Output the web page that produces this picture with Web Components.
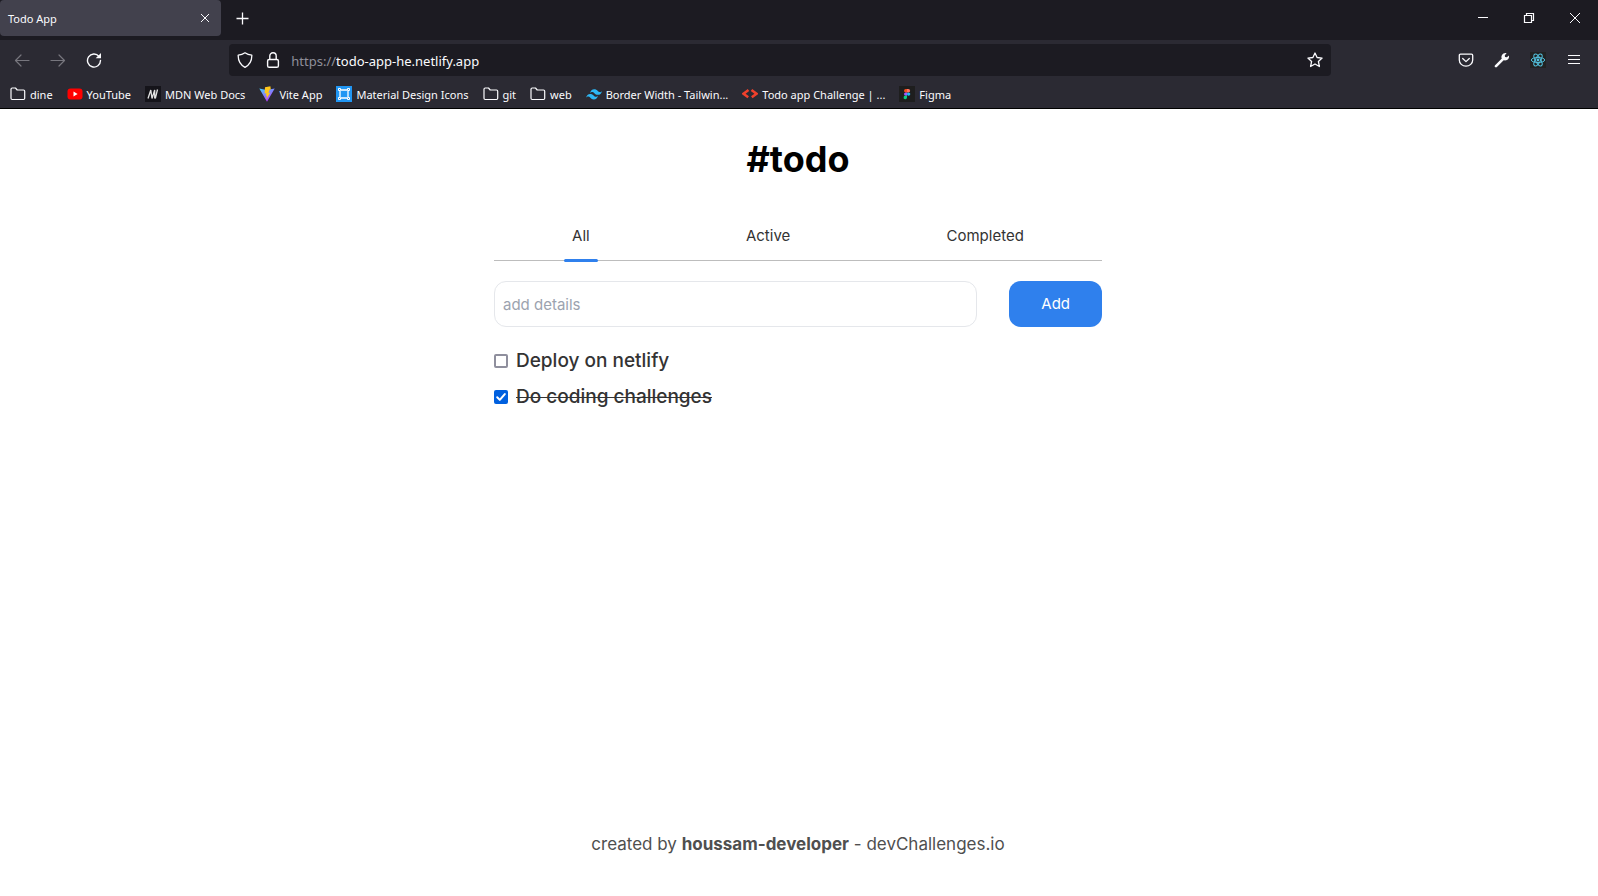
<!DOCTYPE html>
<html lang="en">
<head>
<meta charset="utf-8">
<title>Todo App</title>
<style>
  body { margin: 0; background: #fff; font-family: "Noto Sans", sans-serif; }
</style>
</head>
<body>
<browser-window>
  <browser-tabs slot="tabs"></browser-tabs>
  <nav-toolbar slot="toolbar"></nav-toolbar>
  <bookmarks-bar slot="bookmarks">
    <bookmark-item icon="folder">dine</bookmark-item>
    <bookmark-item icon="youtube">YouTube</bookmark-item>
    <bookmark-item icon="mdn">MDN Web Docs</bookmark-item>
    <bookmark-item icon="vite">Vite App</bookmark-item>
    <bookmark-item icon="mdi">Material Design Icons</bookmark-item>
    <bookmark-item icon="folder">git</bookmark-item>
    <bookmark-item icon="folder">web</bookmark-item>
    <bookmark-item icon="tailwind">Border Width - Tailwin...</bookmark-item>
    <bookmark-item icon="dev">Todo app Challenge | ...</bookmark-item>
    <bookmark-item icon="figma">Figma</bookmark-item>
  </bookmarks-bar>
  <todo-app>
    <todo-item>Deploy on netlify</todo-item>
    <todo-item done>Do coding challenges</todo-item>
  </todo-app>
</browser-window>

<script>
const ICONS = {
  close: '<path d="M4 4l8 8M12 4l-8 8" fill="none" stroke="currentColor" stroke-width="1"/>',
  plus: '<path d="M8.500 2.500v12M2.500 8.500h12" fill="none" stroke="currentColor" stroke-width="1.3"/>',
  minimize: '<path d="M3 7.5h10" stroke="currentColor"/>',
  restore: '<path d="M3.500 5.500h7v7h-7zM5.500 5.500v-2h7v7h-2" fill="none" stroke="currentColor" stroke-width="1.2"/>',
  winclose: '<path d="M3 3l10 10M13 3L3 13" fill="none" stroke="currentColor"/>',
  back: '<path d="M15 8.500H1.500M7 3L1.500 8.500 7 14" fill="none" stroke="currentColor" stroke-width="1.2" stroke-linecap="round" stroke-linejoin="round"/>',
  forward: '<path d="M1 8.500h13.500M9 3l5.500 5.500L9 14" fill="none" stroke="currentColor" stroke-width="1.200" stroke-linecap="round" stroke-linejoin="round"/>',
  reload: '<path d="M13 4.400A6.500 6.500 0 1 0 14.500 8.500" fill="none" stroke="currentColor" stroke-width="1.4" stroke-linecap="round"/><path d="M15 1v5.300H9.700z" fill="currentColor"/>',
  shield: '<path d="M8 .8c2 1.500 4.300 2.200 6.800 2.300.2 5.500-1.700 9.500-6.800 12.300C2.900 12.600 1 8.600 1.200 3.100 3.700 3 6 2.300 8 .8z" fill="none" stroke="currentColor" stroke-width="1.300" stroke-linejoin="round"/>',
  lock: '<rect x="2.600" y="7.500" width="10.800" height="7.800" rx="1.600" fill="none" stroke="currentColor" stroke-width="1.400"/><path d="M4.800 7.500V4a3.200 3.200 0 0 1 6.400 0v3.500" fill="none" stroke="currentColor" stroke-width="1.400"/>',
  star: '<path d="M8 1l2.100 4.500 5 .6-3.700 3.400 1 5L8 12l-4.400 2.500 1-5L.9 6.100l5-.6z" fill="none" stroke="currentColor" stroke-width="1.300" stroke-linejoin="round"/>',
  pocket: '<path d="M2.500 2.200h11c.7 0 1.200.5 1.200 1.200V8a6.700 6.200 0 0 1-13.400 0V3.400c0-.7.5-1.200 1.200-1.200z" fill="none" stroke="currentColor" stroke-width="1.300"/><path d="M4.700 6.500L8 9.600l3.300-3.100" fill="none" stroke="currentColor" stroke-width="1.300" stroke-linecap="round" stroke-linejoin="round"/>',
  wrench: '<path d="M2 14.200L8.500 7.700" stroke="currentColor" stroke-width="2.600" stroke-linecap="round"/><path d="M12.600 1.200L10.800 3.200l.2 1.900 1.900.2 2-1.900c.5 2-.3 3.800-1.900 4.700-1.400.7-2.700.6-3.800 0L7.900 6.800C7.300 5.700 7.200 4.400 8 3c.9-1.500 2.700-2.300 4.600-1.800z" fill="currentColor"/>',
  react: '<path d="M0 0h16v16H0z" fill="#222"/><g fill="none" stroke="#53c1de" stroke-width="1"><ellipse cx="8" cy="8" rx="6.700" ry="2.600"/><ellipse cx="8" cy="8" rx="6.700" ry="2.600" transform="rotate(60 8 8)"/><ellipse cx="8" cy="8" rx="6.700" ry="2.600" transform="rotate(120 8 8)"/></g><circle cx="8" cy="8" r="1.400" fill="#53c1de"/>',
  menu: '<path d="M2 3.500h12M2 7.500h12M2 11.500h12" stroke="currentColor" stroke-width="1.200"/>',
  folder: '<path d="M1 3.200c0-.8.5-1.200 1.200-1.200h3.300l1.700 2h6.300c.7 0 1.200.5 1.200 1.200v7.100c0 .7-.5 1.200-1.200 1.200H2.200c-.7 0-1.200-.5-1.200-1.200z" fill="none" stroke="currentColor" stroke-width="1.200" stroke-linejoin="round"/>',
  youtube: '<rect x=".5" y="2.500" width="15" height="11" rx="3" fill="#f00"/><path d="M6.500 5.600v4.800L10.600 8z" fill="#fff"/>',
  mdn: '<path d="M0 0h16v16H0z" fill="#15141a"/><path d="M3 12.500L5.800 4l1.200 8.500L9.700 4v8.500M12.500 3.500L10.300 12.500" fill="none" stroke="#e0e0e0" stroke-width="1.300" stroke-linejoin="bevel"/>',
  vite: '<defs><linearGradient id="v" x2=".6" y2="1"><stop stop-color="#41d1ff"/><stop offset="1" stop-color="#bd34fe"/></linearGradient></defs><path d="M.3 2.600l7.200 1.300 8.200-1.300L8 15.800z" fill="url(#v)"/><path d="M11.400.2L6 1.300 5.600 7.600l1.800-.4-.6 2.700 1.200-.3-.7 3.700 4-6.700-1.900.3 1.200-3.100 1.200-.2z" fill="#ffc61c"/>',
  mdi: '<path d="M0 0h16v16H0z" fill="#2196f3"/><g fill="none" stroke="#fff"><path d="M4 5v6M12 5v6M5 4h6M5 12h6" stroke-width="1.300"/><path d="M2.500 2.500h2v2h-2zM11.500 2.500h2v2h-2zM2.500 11.500h2v2h-2zM11.500 11.500h2v2h-2z"/></g>',
  tailwind: '<path d="M4 7.200C4.600 4.600 6 3.300 8.200 3.300c3.200 0 3.500 2.400 5.200 2.800 1.100.3 1.800-.1 2.600-1.200-.6 2.600-2 3.900-4.200 3.900C8.600 8.800 8.300 6.400 6.600 6 5.500 5.700 4.800 6.100 4 7.200zM0 11.800c.6-2.600 2-3.900 4.200-3.900 3.200 0 3.500 2.400 5.200 2.800 1.100.3 1.800-.1 2.600-1.200-.6 2.600-2 3.900-4.200 3.900-3.200 0-3.500-2.400-5.200-2.800-1.100-.3-1.800.1-2.600 1.200z" fill="#2db7f5"/>',
  dev: '<path d="M6.500 4L1.500 7.700l4.700 3.600" fill="none" stroke="#f0402c" stroke-width="2.500"/><path d="M9.500 4l5 3.700-4.700 3.600" fill="none" stroke="#f0402c" stroke-width="2.500"/>',
  figma: '<path d="M0 0h16v16H0z" fill="#1e1e1e"/><path d="M8 3H6.700a1.700 1.700 0 0 0 0 3.400H8z" fill="#f24e1e"/><path d="M8 3h1.400a1.700 1.700 0 0 1 0 3.400H8z" fill="#ff7262"/><path d="M8 6.400H6.700a1.700 1.700 0 0 0 0 3.400H8z" fill="#a259ff"/><circle cx="9.600" cy="8.100" r="1.700" fill="#1abcfe"/><path d="M8 9.800H6.700A1.700 1.700 0 1 0 8 11.500z" fill="#0acf83"/>'
};

/* Base class: opens a shadow root and fills it with styles and markup. */
class Base extends HTMLElement {
  constructor() {
    super();
    const t = document.createElement('template');
    t.innerHTML = '<style>*{box-sizing:border-box}</style>' + this.view();
    this.attachShadow({ mode: 'open' }).append(t.content.cloneNode(true));
  }
}

customElements.define('ui-icon', class extends HTMLElement {
  constructor() { super(); this.attachShadow({ mode: 'open' }); }
  connectedCallback() {
    this.shadowRoot.innerHTML = `<style>
      :host { display: block; flex: none; width: 16px; height: 16px; }
      svg { display: block; width: 100%; height: 100%; }
    </style><svg viewBox="0 0 16 16" aria-hidden="true">${ICONS[this.getAttribute('name')] || ''}</svg>`;
  }
});

customElements.define('browser-window', class extends Base {
  view() { return `<style>
    :host { display: flex; flex-direction: column; min-height: 100vh; }
    header { background: #2b2a33; color: #fbfbfe; border-bottom: 1px solid #000; font-size: 11px; }
    main { flex: 1; display: flex; flex-direction: column; }
  </style>
  <header><slot name="tabs"></slot><slot name="toolbar"></slot><slot name="bookmarks"></slot></header>
  <main><slot></slot></main>`; }
});

customElements.define('browser-tabs', class extends Base {
  view() { return `<style>
    :host { display: flex; height: 40px; background: #1c1b22; }
    .tab { display: flex; align-items: center; justify-content: space-between; width: 221px; height: 36px; padding: 0 8px; background: #42414d; border-radius: 4px; }
    button { display: grid; place-items: center; padding: 0; border: 0; background: none; color: inherit; }
    .new { width: 42px; height: 36px; }
    .controls { display: flex; margin-left: auto; height: 36px; }
    .controls button { width: 46px; }
  </style>
  <div class="tab"><span>Todo App</span><button aria-label="Close tab"><ui-icon name="close"></ui-icon></button></div>
  <button class="new" aria-label="New tab"><ui-icon name="plus"></ui-icon></button>
  <div class="controls">
    <button aria-label="Minimize"><ui-icon name="minimize"></ui-icon></button>
    <button aria-label="Restore"><ui-icon name="restore"></ui-icon></button>
    <button aria-label="Close"><ui-icon name="winclose"></ui-icon></button>
  </div>`; }
});

customElements.define('nav-toolbar', class extends Base {
  view() { return `<style>
    :host { display: flex; align-items: center; height: 40px; padding: 0 6px 0 4px; }
    .group { display: flex; }
    button { display: grid; place-items: center; width: 36px; height: 32px; padding: 0; border: 0; background: none; color: inherit; }
    button:disabled { color: #77767e; }
    .spring { flex: 59 1 0; }
    .url { flex: 550 1 0; display: flex; align-items: center; height: 32px; padding-left: 8px; background: #1c1b22; border-radius: 4px; font-size: 13px; }
    .url ui-icon { margin-right: 12px; }
    .address { flex: 1; min-width: 0; display: flex; align-items: center; margin-left: -2px; padding-top: 1px; }
    label { color: #8f8f9a; }
    input { flex: 1; min-width: 0; padding: 0; border: 0; outline: 0; background: none; color: #fbfbfe; font: inherit; }
    .url button { width: 32px; }
    .url button ui-icon { margin: 0; }
  </style>
  <div class="group">
    <button disabled aria-label="Back"><ui-icon name="back"></ui-icon></button>
    <button disabled aria-label="Forward"><ui-icon name="forward"></ui-icon></button>
    <button aria-label="Reload"><ui-icon name="reload"></ui-icon></button>
  </div>
  <div class="spring"></div>
  <div class="url">
    <ui-icon name="shield"></ui-icon><ui-icon name="lock"></ui-icon>
    <div class="address"><label for="address">https://</label><input id="address" value="todo-app-he.netlify.app"></div>
    <button aria-label="Bookmark this page"><ui-icon name="star"></ui-icon></button>
  </div>
  <div class="spring"></div>
  <div class="group">
    <button aria-label="Save to Pocket"><ui-icon name="pocket"></ui-icon></button>
    <button aria-label="Developer tools"><ui-icon name="wrench"></ui-icon></button>
    <button aria-label="React Developer Tools"><ui-icon name="react"></ui-icon></button>
    <button aria-label="Menu"><ui-icon name="menu"></ui-icon></button>
  </div>`; }
});

customElements.define('bookmarks-bar', class extends Base {
  view() { return `<style>
    :host { display: flex; align-items: center; gap: 14px; height: 28px; padding: 0 10px; }
  </style><slot></slot>`; }
});

customElements.define('bookmark-item', class extends Base {
  view() { return `<style>
    :host { display: block; }
    a { display: flex; align-items: center; gap: 4px; color: inherit; text-decoration: none; white-space: nowrap; }
  </style><a href="#"><ui-icon></ui-icon><span><slot></slot></span></a>`; }
  connectedCallback() {
    const icon = this.shadowRoot.querySelector('ui-icon');
    icon.setAttribute('name', this.getAttribute('icon'));
    icon.connectedCallback();
  }
});

customElements.define('todo-app', class extends Base {
  view() { return `<style>
    :host { flex: 1; display: flex; flex-direction: column; align-items: center; padding: 30px 18px 40px 16px; font: 15px/20px Inter, sans-serif; color: #333; }
    section { width: 100%; max-width: 608px; }
    h1 { margin: 0 0 35px; font-size: 36px; line-height: 40px; font-weight: 700; text-align: center; color: #000; }
    nav { display: flex; justify-content: space-around; border-bottom: 1px solid #bdbdbd; }
    nav a { position: relative; padding: 12px 8px 14px; color: inherit; text-decoration: none; }
    nav a[aria-current]::after { content: ""; position: absolute; left: 0; right: 0; bottom: -2px; height: 3px; border-radius: 2px; background: #2f80ed; }
    form { display: flex; gap: 32px; margin: 20px 0 16px; }
    input { flex: 1; min-width: 0; height: 46px; padding: 0 8px; border: 1px solid #e5e7eb; border-radius: 12px; font: inherit; color: inherit; }
    input::placeholder { color: #9ca3af; }
    button { padding: 0 32px; border: 0; border-radius: 12px; background: #2f80ed; color: #fff; font: inherit; }
    footer { margin-top: auto; font-size: 17px; line-height: 24px; color: #4f4f4f; }
  </style>
  <section>
    <h1>#todo</h1>
    <nav><a href="#all" aria-current="page">All</a><a href="#active">Active</a><a href="#completed">Completed</a></nav>
    <form><input aria-label="Todo details" placeholder="add details"><button type="button">Add</button></form>
    <slot></slot>
  </section>
  <footer>created by <b>houssam-developer</b> - devChallenges.io</footer>`; }
});

customElements.define('todo-item', class extends Base {
  view() { return `<style>
    :host { display: flex; align-items: center; height: 36px; font-size: 19px; line-height: 28px; font-weight: 500; }
    input { appearance: none; width: 14px; height: 14px; margin: 0 8px 0 0; border: 2px solid #8f8f9d; border-radius: 2px; background: #fff; }
    input:checked { border: 0; background: #0060df url('data:image/svg+xml,<svg xmlns="http://www.w3.org/2000/svg" viewBox="0 0 14 14"><path d="M3.200 7.200l2.600 2.700 5-5.800" fill="none" stroke="white" stroke-width="2" stroke-linecap="round" stroke-linejoin="round"/></svg>'); }
    :host([done]) label { text-decoration: line-through 1px; }
  </style><input type="checkbox" id="check"><label for="check"><slot></slot></label>`; }
  connectedCallback() { this.shadowRoot.querySelector('input').checked = this.hasAttribute('done'); }
});
</script>
</body>
</html>
